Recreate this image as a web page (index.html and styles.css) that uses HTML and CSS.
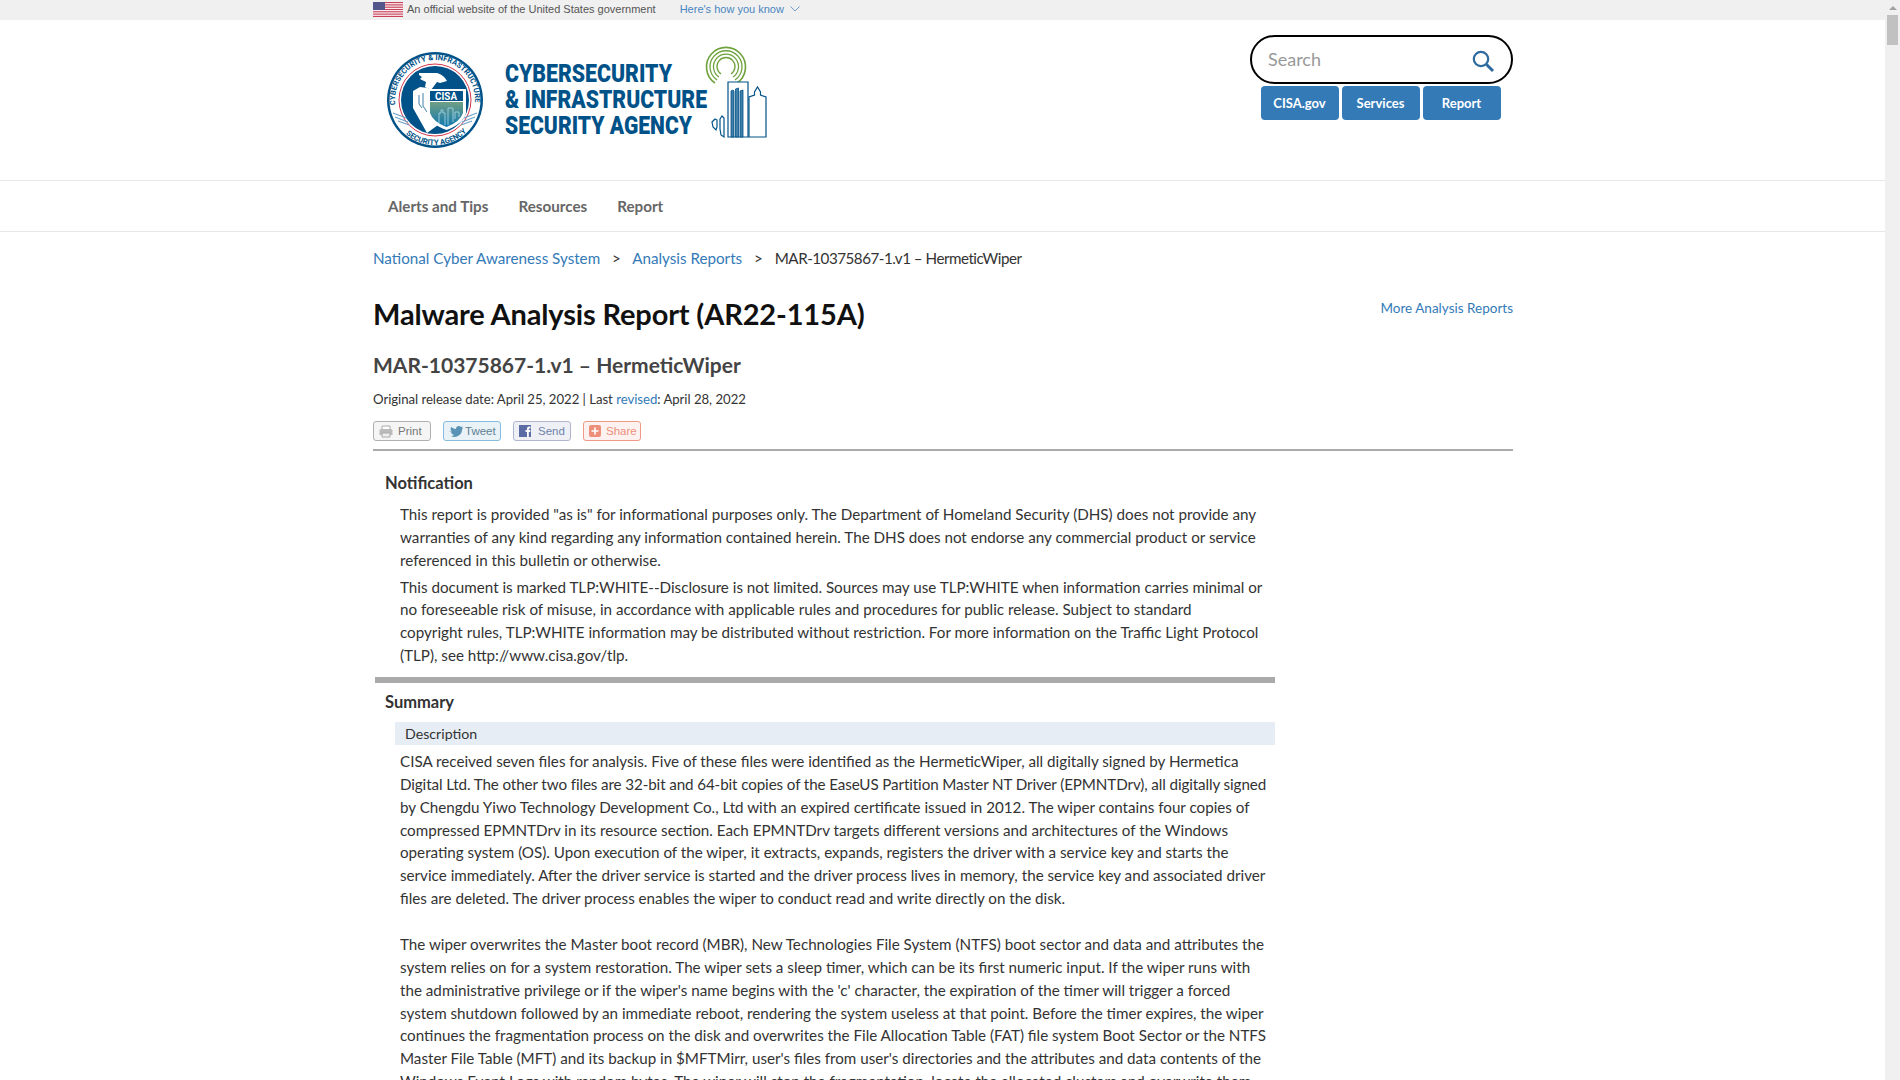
FILE: index.html
```html
<!DOCTYPE html>
<html lang="en">

<head>
  <meta charset="UTF-8">
  <meta name="viewport" content="width=device-width, initial-scale=1.0">
  <title>MAR-10375867-1.v1 – HermeticWiper | CISA</title>
  <link rel="stylesheet" href="styles.css">
</head>

<body>
  <div class="window">
    <div class="page">
      <div class="gov-banner">
        <div class="wrap gov-inner">
          <svg class="flag" width="30" height="15" viewBox="0 0 30 15">
            <rect width="30" height="15" fill="#fff" />
            <rect width="30" height="1.2" fill="#c9425a" />
            <rect y="2.3" width="30" height="1.2" fill="#c9425a" />
            <rect y="4.6" width="30" height="1.2" fill="#c9425a" />
            <rect y="6.9" width="30" height="1.2" fill="#c9425a" />
            <rect y="9.2" width="30" height="1.2" fill="#c9425a" />
            <rect y="11.5" width="30" height="1.2" fill="#c9425a" />
            <rect y="13.8" width="30" height="1.2" fill="#c9425a" />
            <rect width="12" height="8" fill="#54558a" />
          </svg>
          <span class="gov-text">An official website of the United States government</span>
          <a class="gov-link" href="#">Here's how you know</a>
          <svg class="gov-chevron" width="10" height="6" viewBox="0 0 10 6">
            <path d="M.5.5 5 5 9.5.5" fill="none" stroke="#6f9bc8" />
          </svg>
        </div>
      </div>

      <header class="wrap site-header">
        <a class="logo" href="#">
          <svg width="400" height="110" viewBox="0 0 400 110">
            <defs>
              <path id="ring-top" d="M23 64A40 40 0 1 1 101 64" />
              <path id="ring-bottom" d="M28 84A44 44 0 0 0 96 84" />
              <linearGradient id="sky" x1="0" y1="0" x2="0" y2="1">
                <stop offset="0" stop-color="#6f9f86" />
                <stop offset="1" stop-color="#0f78ad" />
              </linearGradient>
            </defs>
            <!-- seal -->
            <circle cx="62" cy="55" r="48" fill="#005288" />
            <circle cx="62" cy="55" r="45.500" fill="#fff" />
            <circle cx="62" cy="55" r="36" fill="#fff" stroke="#d6344c" stroke-width="1" />
            <circle cx="62" cy="55" r="34" fill="#005288" />
            <text class="seal-text"><textPath href="#ring-top" startOffset="4">CYBERSECURITY &amp; INFRASTRUCTURE</textPath></text>
            <text class="seal-text"><textPath href="#ring-bottom" startOffset="7">SECURITY AGENCY</textPath></text>
            <path d="M20 68l13 5M22 72l13 5M25 76l11 4M104 68l-13 5M102 72l-13 5M99 76l-11 4" stroke="#6fa3c7" stroke-width="1.300" />
            <!-- eagle and arm -->
            <path d="M46 28h18q7 2 10 8l-7 2-3-1-6 8-6-3 1-5-6-3 2-2-3-2z" fill="#fff" />
            <path d="M40 46l7-4 8 1 3 6-4 16 11 15-11 8-14-25z" fill="#fff" />
            <path d="M46 50v9l3 4M50 48v13l4 6" fill="none" stroke="#3f7fa8" />
            <!-- shield -->
            <path d="M54 44h39v24q-3 11-19.500 17Q57 79 54 68z" fill="#fff" />
            <path d="M57 46h33v10H57z" fill="#005288" />
            <path d="M57 57h33v11q-3 9-16.500 14Q60 77 57 68z" fill="url(#sky)" />
            <text class="seal-cisa" x="62" y="54.500" textLength="22" lengthAdjust="spacingAndGlyphs">CISA</text>
            <path d="M66 78V68h2v-3h2v3h2v12M75 80V63h5v14M82 74V67h4v5" fill="none" stroke="#9fd0e6" stroke-width=".9" />
            <!-- wordmark -->
            <text class="mark" x="132" y="37" textLength="167" lengthAdjust="spacingAndGlyphs">CYBERSECURITY</text>
            <text class="mark" x="132" y="62.500" textLength="202" lengthAdjust="spacingAndGlyphs">&amp; INFRASTRUCTURE</text>
            <text class="mark" x="132" y="88.500" textLength="187" lengthAdjust="spacingAndGlyphs">SECURITY AGENCY</text>
            <!-- signal rings -->
            <g fill="none" stroke="#6fa23d">
              <path d="M342 38A19.500 19.500 0 1 1 364 38" stroke-width="1.600" />
              <path d="M344 35A16 16 0 1 1 362 35" stroke-width="1.300" />
              <path d="M346 32A12.500 12.500 0 1 1 360 32" stroke-width="1.300" />
              <path d="M348 29A9 9 0 1 1 358 29" stroke-width="1.300" />
            </g>
            <!-- skyline -->
            <g fill="#fff" stroke="#005288" stroke-width="1.200">
              <path d="M355 92V37h20v55z" />
              <path d="M358 92V46l2-1 1 1v46zM362.500 92V44l3-1v49zM367 92V46l3-1v47z" fill="#3f7fa8" stroke-width=".8" />
              <path d="M376 92V52l5.500-2v-3l3-5 3 5v3l5.500 2v40z" />
              <path d="M339 77l3-3 2 1v7l-1 3-3-3zM347 74l2-3 2 2v19l-3-2-1-6z" />
            </g>
          </svg>
        </a>
        <div class="header-tools">
          <div class="search-box">
            <span class="search-label">Search</span>
            <svg class="search-icon" width="24" height="24" viewBox="0 0 24 24">
              <circle cx="10" cy="10" r="7.200" fill="none" stroke="#2e6a9e" stroke-width="2.200" />
              <path d="m15.500 15.500 6.500 6.500" stroke="#2e6a9e" stroke-width="3" />
            </svg>
          </div>
          <div class="tool-buttons">
            <a class="tool-button" href="#">CISA.gov</a>
            <a class="tool-button" href="#">Services</a>
            <a class="tool-button" href="#">Report</a>
          </div>
        </div>
      </header>

      <nav class="main-nav">
        <div class="wrap nav-inner">
          <a href="#">Alerts and Tips</a>
          <a href="#">Resources</a>
          <a href="#">Report</a>
        </div>
      </nav>

      <main class="wrap">
        <div class="breadcrumbs">
          <a href="#">National Cyber Awareness System</a>
          <span class="crumb-sep">&gt;</span>
          <a href="#">Analysis Reports</a>
          <span class="crumb-sep">&gt;</span>
          <span class="crumb-current">MAR-10375867-1.v1 – HermeticWiper</span>
        </div>

        <div class="title-row">
          <h1>Malware Analysis Report (AR22-115A)</h1>
          <a class="more-link" href="#">More Analysis Reports</a>
        </div>
        <h2>MAR-10375867-1.v1 – HermeticWiper</h2>
        <p class="dates">Original release date: April 25, 2022 | Last <a href="#">revised</a>: April 28, 2022</p>

        <div class="share-row">
          <a class="share share-print" href="#">
            <svg width="14" height="13" viewBox="0 0 14 13">
              <path d="M3 4V1h8v3" fill="#fff" stroke="#aaa" />
              <path d="M.5 5.500q0-1.500 1.500-1.500h10q1.500 0 1.500 1.500V10h-13z" fill="#bbb" />
              <path d="M3 8h8v4H3z" fill="#eee" stroke="#aaa" />
            </svg>
            Print
          </a>
          <a class="share share-tweet" href="#">
            <svg width="14" height="12" viewBox="0 0 14 12">
              <path d="M0 6q2 0 3 1-2-2-1-5 3 2 5 2 0-3 3-3 1 0 2 1l2-.5-1 1.500 1 .5-1 1q0 5-5 7-3 1-6-.5 2 0 3-1-3-1-3-3h1.500Q1 7 0 6z" fill="#5a93b5" />
            </svg>
            Tweet
          </a>
          <a class="share share-send" href="#">
            <svg width="12" height="12" viewBox="0 0 12 12">
              <rect width="12" height="12" fill="#5a6ca3" />
              <path d="M8 12V7H6.500V5H8V3.500Q8 1.500 10 1.500h1.500v2H10.300q-.5 0-.5.5v1h1.700l-.3 2H9.800v5z" fill="#fff" />
            </svg>
            Send
          </a>
          <a class="share share-plus" href="#">
            <svg width="12" height="12" viewBox="0 0 12 12">
              <rect width="12" height="12" rx="2" fill="#ee8f7c" />
              <path d="M6 2.500v7M2.500 6h7" stroke="#fff" stroke-width="1.600" />
            </svg>
            Share
          </a>
        </div>

        <div class="report">
          <h3>Notification</h3>
          <div class="report-text">
            <p>This report is provided "as is" for informational purposes only. The Department of Homeland Security (DHS) does not provide any<br>
              warranties of any kind regarding any information contained herein. The DHS does not endorse any commercial product or service<br>
              referenced in this bulletin or otherwise.</p>
            <p>This document is marked TLP:WHITE--Disclosure is not limited. Sources may use TLP:WHITE when information carries minimal or<br>
              no foreseeable risk of misuse, in accordance with applicable rules and procedures for public release. Subject to standard<br>
              copyright rules, TLP:WHITE information may be distributed without restriction. For more information on the Traffic Light Protocol<br>
              (TLP), see http://www.cisa.gov/tlp.</p>
          </div>
          <div class="report-rule"></div>
          <h3>Summary</h3>
          <div class="band">Description</div>
          <div class="report-text">
            <p>CISA received seven files for analysis. Five of these files were identified as the HermeticWiper, all digitally signed by Hermetica<br>
              <span class="tight">Digital Ltd. The other two files are 32-bit and 64-bit copies of the EaseUS Partition Master NT Driver (EPMNTDrv), all digitally signed</span><br>
              by Chengdu Yiwo Technology Development Co., Ltd with an expired certificate issued in 2012. The wiper contains four copies of<br>
              compressed EPMNTDrv in its resource section. Each EPMNTDrv targets different versions and architectures of the Windows<br>
              operating system (OS). Upon execution of the wiper, it extracts, expands, registers the driver with a service key and starts the<br>
              service immediately. After the driver service is started and the driver process lives in memory, the service key and associated driver<br>
              files are deleted. The driver process enables the wiper to conduct read and write directly on the disk.</p>
            <p class="gap">The wiper overwrites the Master boot record (MBR), New Technologies File System (NTFS) boot sector and data and attributes the<br>
              system relies on for a system restoration. The wiper sets a sleep timer, which can be its first numeric input. If the wiper runs with<br>
              the administrative privilege or if the wiper's name begins with the 'c' character, the expiration of the timer will trigger a forced<br>
              system shutdown followed by an immediate reboot, rendering the system useless at that point. Before the timer expires, the wiper<br>
              continues the fragmentation process on the disk and overwrites the File Allocation Table (FAT) file system Boot Sector or the NTFS<br>
              Master File Table (MFT) and its backup in $MFTMirr, user's files from user's directories and the attributes and data contents of the<br>
              Windows Event Logs with random bytes. The wiper will stop the fragmentation, locate the allocated clusters and overwrite them</p>
          </div>
        </div>
      </main>
    </div>

    <div class="scrollbar">
      <div class="scroll-arrow"></div>
      <div class="scroll-thumb"></div>
    </div>
  </div>
</body>

</html>
```

FILE: styles.css
```css
* {
  box-sizing: border-box;
}

html,
body {
  margin: 0;
  padding: 0;
  height: 100%;
  overflow: hidden;
}

body {
  font-family: "Lato", "Noto Sans", sans-serif;
  font-size: 15.2px;
  color: #333;
  background-color: #fff;
}

a {
  color: #337ab7;
  text-decoration: none;
}

.window {
  display: flex;
  height: 100vh;
}

.page {
  flex: 1;
  min-width: 0;
  overflow: hidden;
}

.wrap {
  width: 1140px;
  margin-left: 373px;
}

/* custom scrollbar track, the page is cut off at the window edge */
.scrollbar {
  width: 15px;
  background-color: #f0f0f0;
  display: flex;
  flex-direction: column;
  align-items: center;
  padding-top: 6px;
}

.scroll-arrow {
  width: 0;
  height: 0;
  border-left: 4px solid transparent;
  border-right: 4px solid transparent;
  border-bottom: 4px solid #a3a3a3;
}

.scroll-thumb {
  width: 11px;
  height: 30px;
  margin-top: 5px;
  background-color: #c1c1c1;
}

.gov-banner {
  height: 20px;
  background-color: #f0f0f0;
}

.gov-inner {
  height: 100%;
  display: flex;
  align-items: center;
  padding-bottom: 2px;
  font-family: "Liberation Sans", Arial, sans-serif;
  font-size: 11px;
}

.flag {
  margin-right: 4px;
}

.gov-text {
  color: #555;
}

.gov-link {
  margin-left: 24px;
  color: #4a86c0;
}

.gov-chevron {
  margin-left: 6px;
}

.site-header {
  height: 160px;
  display: flex;
  justify-content: space-between;
}

.logo {
  flex: none;
  padding-top: 25px;
}

.seal-text {
  font-family: "Roboto", sans-serif;
  font-size: 7.6px;
  font-weight: 700;
  fill: #005288;
}

.seal-cisa {
  font-family: "Roboto", sans-serif;
  font-size: 10.500px;
  font-weight: 700;
  fill: #fff;
}

.mark {
  font-family: "Roboto", sans-serif;
  font-size: 26.500px;
  font-weight: 900;
  fill: #005288;
}

.header-tools {
  width: 263px;
  padding-top: 15px;
  display: flex;
  flex-direction: column;
  align-items: center;
}

.search-box {
  width: 263px;
  height: 49px;
  border: 2px solid #000;
  border-radius: 25px;
  display: flex;
  align-items: center;
  justify-content: space-between;
  padding: 0 16px 0 16px;
}

.search-label {
  padding-bottom: 2px;
  font-size: 18px;
  color: #999;
}

.search-icon {
  margin-top: 2px;
}

.tool-buttons {
  display: flex;
  gap: 3px;
  margin-top: 2px;
  margin-right: 2px;
}

.tool-button {
  width: 78px;
  height: 34px;
  line-height: 34px;
  text-align: center;
  font-size: 13px;
  font-weight: 700;
  color: #fff;
  background-color: #337ab7;
  border-radius: 4px;
}

.main-nav {
  height: 52px;
  border-top: 1px solid #e7e7e7;
  border-bottom: 1px solid #e7e7e7;
}

.nav-inner {
  height: 100%;
  display: flex;
  align-items: center;
  gap: 30px;
  padding-left: 15px;
}

.nav-inner a {
  color: #666;
  font-size: 15.200px;
  font-weight: 700;
}

.breadcrumbs {
  margin-top: 15px;
  height: 22px;
  line-height: 22px;
  font-size: 15.200px;
}

.crumb-sep {
  margin: 0 8px;
}

.crumb-current {
  letter-spacing: -.5px;
}

.title-row {
  display: flex;
  justify-content: space-between;
  margin-top: 25px;
}

h1 {
  margin: 0;
  font-size: 29px;
  line-height: 40px;
  font-weight: 700;
  letter-spacing: -.15px;
  color: #111;
}

.more-link {
  margin-top: 4px;
  font-size: 13.500px;
  line-height: 20px;
}

h2 {
  margin: 16px 0 0;
  font-size: 21px;
  line-height: 30px;
  font-weight: 700;
  color: #444;
}

.dates {
  margin: 9px 0 0;
  font-size: 13.200px;
  line-height: 20px;
  letter-spacing: -.04px;
}

.share-row {
  display: flex;
  gap: 12px;
  margin-top: 12px;
  padding-bottom: 8px;
  border-bottom: 2px solid #aaa;
}

.share {
  width: 58px;
  height: 20px;
  display: flex;
  align-items: center;
  gap: 5px;
  padding-left: 5px;
  border: 1px solid;
  border-radius: 3px;
  font-family: "Liberation Sans", Arial, sans-serif;
  font-size: 11.500px;
}

.share-print {
  color: #777;
  border-color: #b0b0b0;
  background-color: #f5f5f5;
}

.share-tweet {
  gap: 2px;
  color: #5f7f92;
  border-color: #85bcdc;
  background-color: #e9f2f7;
}

.share-send {
  gap: 7px;
  color: #6e80a8;
  border-color: #aeb6d0;
  background-color: #eef0f6;
}

.share-plus {
  color: #ee8f7c;
  border-color: #ee9a88;
  background-color: #fdf2ef;
}

.report {
  width: 900px;
  margin-left: 2px;
}

h3 {
  margin: 0;
  padding-left: 10px;
  font-size: 16.500px;
  line-height: 24px;
  font-weight: 700;
  color: #333;
}

.report > h3:first-child {
  margin-top: 20px;
}

.report-text {
  padding-left: 25px;
  margin-top: 8px;
  white-space: nowrap;
}

.report-text p {
  margin: 0 0 4px;
  line-height: 22.860px;
}

.report-text p.gap {
  margin-top: 23px;
}

.tight {
  letter-spacing: -.11px;
}

.report-rule {
  height: 6px;
  margin-top: 10px;
  background-color: #aaa;
}

.report-rule + h3 {
  margin-top: 7px;
}

.band {
  margin-left: 20px;
  margin-top: 8px;
  padding-left: 10px;
  height: 23px;
  line-height: 23px;
  font-size: 14.200px;
  background-color: #e6edf4;
}

.band + .report-text {
  margin-top: 5px;
}
```
